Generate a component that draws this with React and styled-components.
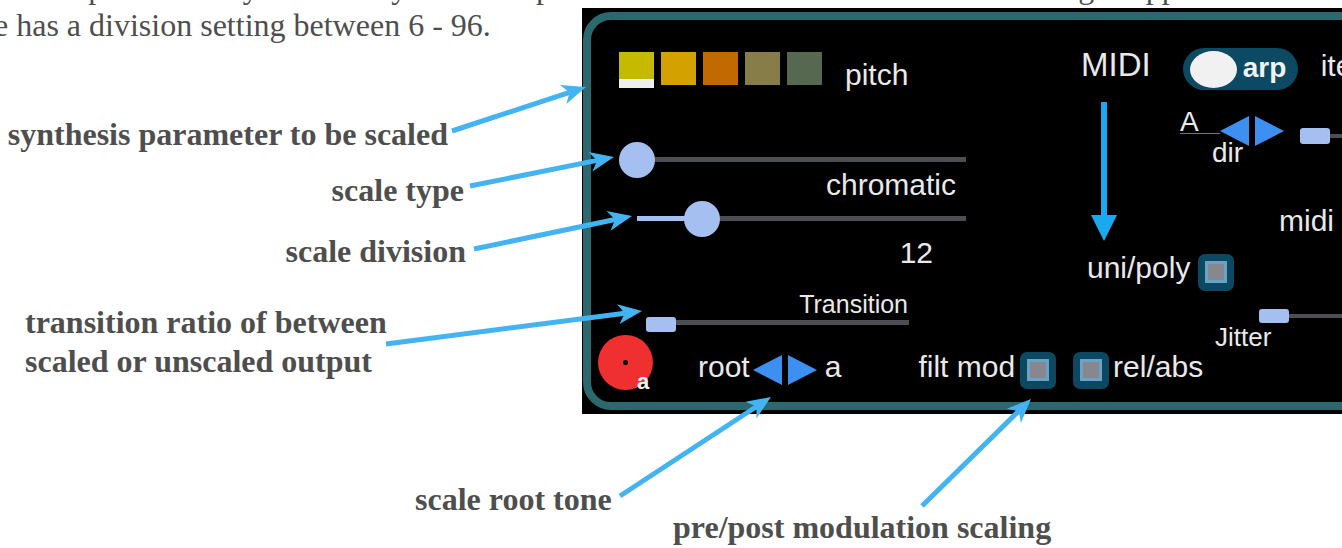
import React from "react";
import styled, { createGlobalStyle } from "styled-components";

const Global = createGlobalStyle`
  html, body { margin: 0; padding: 0; background: #ffffff; }
  #root { width: 1342px; height: 548px; }
`;

const Page = styled.div`
  position: relative;
  width: 1342px;
  height: 548px;
  overflow: hidden;
  background: #ffffff;
  font-family: "Liberation Serif", "Times New Roman", serif;
  color: #4e4e4e;
`;

const PrevClip = styled.div`
  height: 8px;
  overflow: hidden;
`;

const PrevLine = styled.p`
  margin: -31px 0 0 -6px;
  font-size: 32px;
  line-height: 37px;
  white-space: nowrap;
`;

const Main = styled.div`
  display: flex;
  align-items: flex-start;
`;

const LeftCol = styled.div`
  flex: none;
  width: 582px;
  display: flex;
  flex-direction: column;
`;

const Intro = styled.p`
  margin: 1px 0 0 -6px;
  font-size: 32px;
  line-height: 32px;
  white-space: nowrap;
`;

const Callout = styled.div`
  margin-top: ${(p) => p.$mt}px;
  padding-left: ${(p) => p.$left || 0}px;
  padding-right: ${(p) => p.$right || 0}px;
  text-align: ${(p) => (p.$right ? "right" : "left")};
  font-weight: bold;
  font-size: 32px;
  line-height: ${(p) => p.$lh || 32}px;
  white-space: nowrap;
`;

const Panel = styled.div`
  flex: none;
  width: 800px;
  height: 406px;
  box-sizing: border-box;
  padding: 4px 0 0 1px;
  background: #000000;
`;

const Frame = styled.div`
  width: 820px;
  height: 398px;
  box-sizing: border-box;
  border: 8px solid #2b696f;
  border-radius: 28px;
  display: flex;
  align-items: flex-start;
  font-family: "Liberation Sans", Arial, Helvetica, sans-serif;
  color: #e9e9e9;
`;

const ScaleSection = styled.div`
  flex: none;
  width: 480px;
  box-sizing: border-box;
  padding-left: 7px;
  display: flex;
  flex-direction: column;
  align-items: flex-start;
`;

const MidiSection = styled.div`
  flex: none;
  width: 320px;
  display: flex;
  flex-direction: column;
  align-items: flex-start;
`;

const SwatchRow = styled.div`
  display: flex;
  align-items: flex-start;
  gap: 7px;
  margin: 32px 0 0 21px;
  height: 36px;
`;

const Swatch = styled.div`
  width: 35px;
  height: ${(p) => (p.$tall ? 36 : 33)}px;
  background: ${(p) => p.$color};
  display: flex;
  flex-direction: column;
  justify-content: flex-end;
`;

const SwatchMark = styled.div`
  height: 9px;
  background: #efefef;
`;

const Txt = styled.span`
  flex: none;
  display: block;
  font-size: ${(p) => p.$size || 30}px;
  line-height: ${(p) => p.$lh || p.$size || 30}px;
  font-weight: ${(p) => (p.$bold ? "bold" : "normal")};
  margin-top: ${(p) => p.$mt || 0}px;
  margin-left: ${(p) => p.$ml || 0}px;
  margin-bottom: ${(p) => p.$mb || 0}px;
  white-space: nowrap;
  color: ${(p) => p.$color || "#e9e9e9"};
`;

const Caption = styled(Txt)`
  width: ${(p) => p.$w}px;
  text-align: right;
`;

const SliderBox = styled.div`
  position: relative;
  flex: none;
  width: ${(p) => p.$w}px;
  height: ${(p) => p.$h}px;
  margin-top: ${(p) => p.$mt || 0}px;
  margin-left: ${(p) => p.$ml || 0}px;
`;

const Track = styled.div`
  position: absolute;
  left: 0;
  right: 0;
  top: 50%;
  height: ${(p) => p.$t || 5}px;
  margin-top: -${(p) => (p.$t || 5) / 2}px;
  background: #4b4e52;
`;

const TrackFill = styled.div`
  position: absolute;
  left: 0;
  top: 50%;
  height: 5px;
  margin-top: -2.5px;
  background: #a4bff0;
`;

const RoundKnob = styled.div`
  position: absolute;
  top: 50%;
  width: 36px;
  height: 36px;
  margin-top: -18px;
  border-radius: 50%;
  background: #a4bff0;
`;

const BarThumb = styled.div`
  position: absolute;
  left: 0;
  top: 50%;
  width: 30px;
  height: ${(p) => p.$h || 15}px;
  margin-top: ${(p) => p.$dy}px;
  border-radius: 3px;
  background: #a4bff0;
`;

const BottomRow = styled.div`
  display: flex;
  align-items: flex-start;
  margin-top: 5px;
`;

const Dial = styled.div`
  position: relative;
  flex: none;
  width: 55px;
  height: 55px;
  border-radius: 50%;
  background: #f03030;
  display: flex;
  align-items: center;
  justify-content: center;
`;

const DialDot = styled.div`
  width: 5px;
  height: 5px;
  border-radius: 50%;
  background: #000;
`;

const DialBadge = styled.span`
  position: absolute;
  left: 39px;
  top: 36px;
  font-size: 22px;
  line-height: 22px;
  font-weight: bold;
  color: #f4f4f4;
`;

const InlineControls = styled.div`
  display: flex;
  align-items: center;
  height: 37px;
  margin: 17px 0 0 45px;
`;

const Stepper = styled.svg`
  flex: none;
  display: block;
  margin-left: ${(p) => p.$ml || 0}px;
  margin-top: ${(p) => p.$mt || 0}px;
`;

const Check = styled.div`
  flex: none;
  width: 36px;
  height: 37px;
  margin-left: ${(p) => p.$ml}px;
  border-radius: 7px;
  background: #0d4862;
  display: flex;
  align-items: center;
  justify-content: center;
`;

const CheckInner = styled.div`
  width: 16px;
  height: 16px;
  border: 3px solid #6aa3c6;
  background: #88878f;
`;

const MidiRow = styled.div`
  display: flex;
  align-items: center;
  height: 42px;
  margin: 28px 0 0 10px;
`;

const Toggle = styled.div`
  flex: none;
  display: flex;
  align-items: center;
  width: 115px;
  height: 42px;
  box-sizing: border-box;
  padding-left: 7px;
  margin-left: 32px;
  border-radius: 21px;
  background: #0b4a62;
`;

const ToggleKnob = styled.div`
  width: 47px;
  height: 37px;
  border-radius: 50%;
  background: #f1f1f1;
`;

const MiddleBlock = styled.div`
  display: flex;
  align-items: flex-start;
  height: 139px;
  margin-top: 12px;
`;

const DirCol = styled.div`
  display: flex;
  flex-direction: column;
  align-items: flex-start;
  margin-left: 63px;
`;

const DirRow = styled.div`
  display: flex;
  align-items: flex-start;
  margin-top: 6px;
`;

const ALabel = styled.div`
  flex: none;
  width: 40px;
  height: 25px;
  border-bottom: 1px solid #4a7cc4;
  font-size: 28px;
  line-height: 28px;
`;

const UniRow = styled.div`
  display: flex;
  align-items: center;
  height: 36px;
  margin: 13px 0 0 16px;
`;

const BottomNotes = styled.div`
  display: flex;
  flex-direction: column;
  margin-top: 71px;
`;

const Overlay = styled.svg`
  position: absolute;
  left: 0;
  top: 0;
  pointer-events: none;
`;

const ARROW = "#43b4f1";

const Arrow = ({ x1, y1, x2, y2 }) => {
  const dx = x2 - x1;
  const dy = y2 - y1;
  const len = Math.hypot(dx, dy);
  const ux = dx / len;
  const uy = dy / len;
  const hl = 24;
  const hw = 10;
  const bx = x2 - ux * hl;
  const by = y2 - uy * hl;
  const px = -uy;
  const py = ux;
  const nx = x2 - ux * hl * 0.72;
  const ny = y2 - uy * hl * 0.72;
  return (
    <g>
      <line x1={x1} y1={y1} x2={nx} y2={ny} stroke={ARROW} strokeWidth="5" />
      <polygon
        fill={ARROW}
        points={`${x2},${y2} ${bx + px * hw},${by + py * hw} ${nx},${ny} ${bx - px * hw},${by - py * hw}`}
      />
    </g>
  );
};

const StepperArrows = ({ ml, mt }) => (
  <Stepper width="64" height="30" viewBox="0 0 64 30" $ml={ml} $mt={mt}>
    <polygon points="0,15 29,0 29,30" fill="#3d8ff2" />
    <polygon points="35,0 64,15 35,30" fill="#3d8ff2" />
  </Stepper>
);

export default function App() {
  return (
    <Page>
      <Global />
      <PrevClip>
        <PrevLine>
          e the input values by a scale key of the map so the note is set to its closest tone setting is applied
        </PrevLine>
      </PrevClip>
      <Main>
        <LeftCol>
          <Intro>e has a division setting between 6 - 96.</Intro>
          <Callout $mt={77} $right={134}>synthesis parameter to be scaled</Callout>
          <Callout $mt={24} $right={118}>scale type</Callout>
          <Callout $mt={29} $right={116}>scale division</Callout>
          <Callout $mt={36} $left={25} $lh={39}>
            transition ratio of between
            <br />
            scaled or unscaled output
          </Callout>
        </LeftCol>
        <Panel>
          <Frame>
            <ScaleSection>
              <SwatchRow>
                <Swatch $color="#c4ba00" $tall>
                  <SwatchMark />
                </Swatch>
                <Swatch $color="#d3a200" />
                <Swatch $color="#c26a02" />
                <Swatch $color="#867d48" />
                <Swatch $color="#566850" />
                <Txt $mt={7.6} $ml={16}>pitch</Txt>
              </SwatchRow>
              <SliderBox $w={347} $h={20} $mt={61.5} $ml={21}>
                <Track />
                <RoundKnob style={{ left: 0 }} />
              </SliderBox>
              <Caption $w={358}>chromatic</Caption>
              <SliderBox $w={329} $h={20} $mt={9} $ml={39}>
                <Track />
                <TrackFill style={{ width: 65 }} />
                <RoundKnob style={{ left: 47 }} />
              </SliderBox>
              <Caption $w={335} $mt={9}>12</Caption>
              <Caption $w={310} $size={25} $lh={23} $mt={25}>Transition</Caption>
              <SliderBox $w={263} $h={14} $ml={48}>
                <Track />
                <BarThumb $dy={-6} />
              </SliderBox>
              <BottomRow>
                <Dial>
                  <DialDot />
                  <DialBadge>a</DialBadge>
                </Dial>
                <InlineControls>
                  <Txt $mb={6}>root</Txt>
                  <StepperArrows ml={3} />
                  <Txt $mb={6} $ml={8}>a</Txt>
                  <Txt $mb={6} $ml={77}>filt mod</Txt>
                  <Check $ml={5}>
                    <CheckInner />
                  </Check>
                  <Check $ml={17}>
                    <CheckInner />
                  </Check>
                  <Txt $mb={6} $ml={4}>rel/abs</Txt>
                </InlineControls>
              </BottomRow>
            </ScaleSection>
            <MidiSection>
              <MidiRow>
                <Txt $size={33} $mb={9}>MIDI</Txt>
                <Toggle>
                  <ToggleKnob />
                  <Txt $size={28} $bold $ml={6} $mb={2} $color="#f2f2f2">arp</Txt>
                </Toggle>
                <Txt $ml={23} $mb={7}>iter</Txt>
              </MidiRow>
              <MiddleBlock>
                <Stepper width="26" height="139" viewBox="0 0 26 139" $ml={20}>
                  <rect x="10" y="0" width="6" height="118" fill="#1aa9f0" />
                  <polygon points="0,113 26,113 13,139" fill="#1aa9f0" />
                </Stepper>
                <DirCol>
                  <DirRow>
                    <ALabel>A</ALabel>
                    <StepperArrows mt={8} />
                    <SliderBox $w={60} $h={16} $mt={20} $ml={16}>
                      <Track $t={4} />
                      <BarThumb $h={16} $dy={-8} />
                    </SliderBox>
                  </DirRow>
                  <Txt $size={28} $lh={20} $mt={-3} $ml={32}>dir</Txt>
                  <Txt $mt={43} $ml={99}>midi</Txt>
                </DirCol>
              </MiddleBlock>
              <UniRow>
                <Txt $mb={9}>uni/poly</Txt>
                <Check $ml={8}>
                  <CheckInner />
                </Check>
              </UniRow>
              <SliderBox $w={120} $h={14} $mt={19} $ml={188}>
                <Track $t={4} />
                <BarThumb $h={14} $dy={-7} />
              </SliderBox>
              <Txt $size={26} $lh={22} $mt={3} $ml={144}>Jitter</Txt>
            </MidiSection>
          </Frame>
        </Panel>
      </Main>
      <BottomNotes>
        <Callout $mt={0} $left={415} $lh={28}>scale root tone</Callout>
        <Callout $mt={0} $left={673} $lh={28}>pre/post modulation scaling</Callout>
      </BottomNotes>
      <Overlay width="1342" height="548" viewBox="0 0 1342 548">
        <Arrow x1={452} y1={131} x2={586} y2={87} />
        <Arrow x1={470} y1={186} x2={614} y2={157} />
        <Arrow x1={474} y1={249} x2={632} y2={216} />
        <Arrow x1={386} y1={344} x2={642} y2={311} />
        <Arrow x1={620} y1={496} x2={771} y2={397} />
        <Arrow x1={922} y1={506} x2={1031} y2={399} />
      </Overlay>
    </Page>
  );
}
